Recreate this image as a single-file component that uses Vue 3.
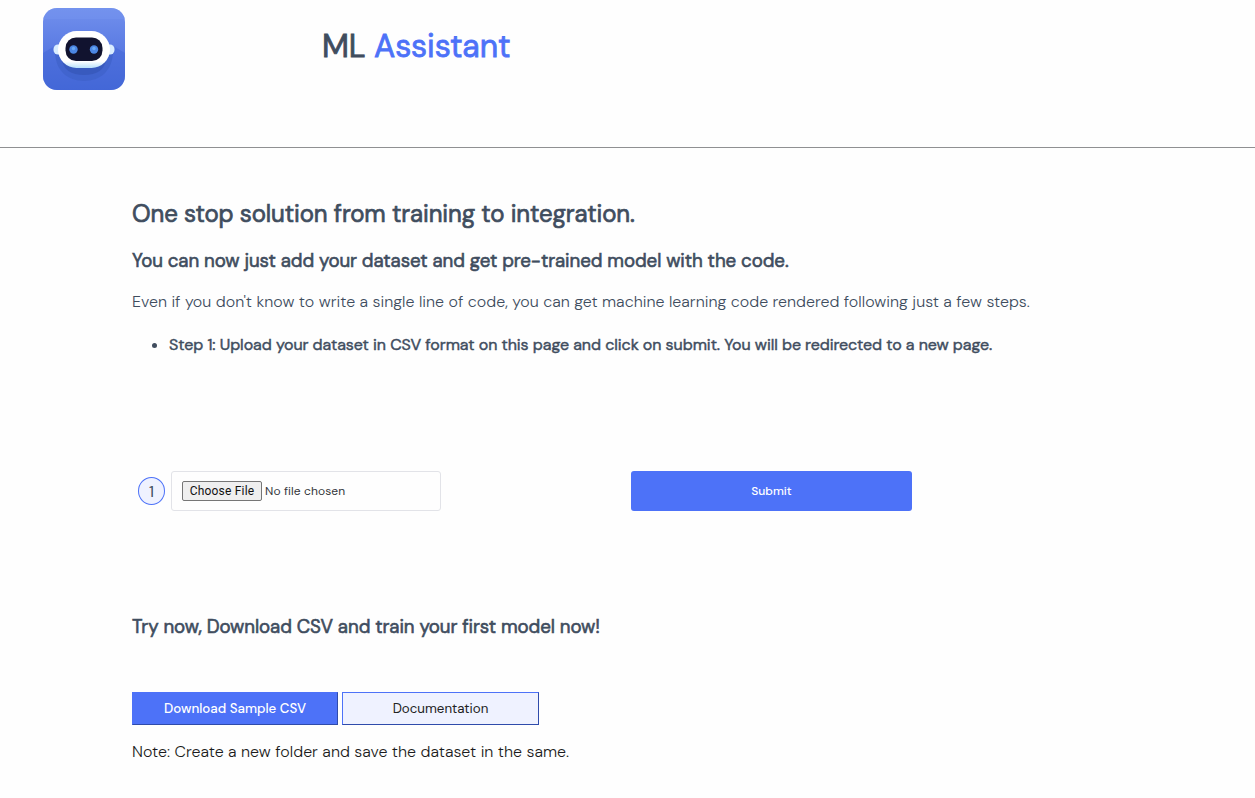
<script setup>
const steps = [
  'Step 1: Upload your dataset in CSV format on this page and click on submit. You will be redirected to a new page.',
]
</script>

<template>
  <div class="page">
    <header class="header">
      <svg class="logo" viewBox="0 0 82 82" role="img" aria-label="Robot logo">
        <defs>
          <linearGradient id="tile" x1="0" y1="0" x2="0" y2="1">
            <stop offset="0" stop-color="#7190ed" />
            <stop offset="0.5" stop-color="#5b7be3" />
            <stop offset="1" stop-color="#4569d9" />
          </linearGradient>
          <linearGradient id="shell" x1="0" y1="0" x2="0" y2="1">
            <stop offset="0.82" stop-color="#ffffff" />
            <stop offset="1" stop-color="#b9e2fc" />
          </linearGradient>
          <clipPath id="round"><rect width="82" height="82" rx="14" /></clipPath>
        </defs>
        <g clip-path="url(#round)">
          <rect width="82" height="82" fill="url(#tile)" />
          <rect width="82" height="11" fill="#7897ef" opacity="0.4" />
          <path d="M0 45 12 38H70L82 45V82H0Z" fill="#4166d6" opacity="0.5" />
          <path d="M12 43H70C70 62 58 73 41 73S12 62 12 43Z" fill="#3d61c7" opacity="0.65" />
          <path d="M18 49H64C62 62 54 67 41 67S20 62 18 49Z" fill="#3455b6" opacity="0.65" />
        </g>
        <rect x="10.5" y="36.5" width="61" height="10" rx="4.5" fill="#d9edff" />
        <rect x="15" y="23" width="52" height="37" rx="18.5" fill="url(#shell)" />
        <rect x="22.5" y="29.5" width="37" height="23.5" rx="10.5" fill="#11132f" />
        <circle cx="30.5" cy="41.5" r="4.2" fill="#4b86e3" />
        <circle cx="51" cy="41.5" r="4.2" fill="#4b86e3" />
        <circle cx="30.5" cy="40.5" r="1.7" fill="#69a9f5" />
        <circle cx="51" cy="40.5" r="1.7" fill="#69a9f5" />
      </svg>
      <h1 class="brand">ML <span class="accent">Assistant</span></h1>
    </header>

    <main class="content">
      <h2 class="headline"><span>One stop solution from training to integration.</span></h2>
      <h3 class="subhead"><span>You can now just add your dataset and get pre-trained model with the code.</span></h3>
      <p class="intro"><span>Even if you don't know to write a single line of code, you can get machine learning code rendered following just a few steps.</span></p>
      <ul class="steps">
        <li v-for="step in steps" :key="step"><span>{{ step }}</span></li>
      </ul>

      <form class="upload" @submit.prevent>
        <span class="badge">1</span>
        <div class="file">
          <button type="button" class="choose">Choose File</button>
          <span class="none">No file chosen</span>
        </div>
        <button type="submit" class="submit">Submit</button>
      </form>

      <h3 class="try"><span>Try now, Download CSV and train your first model now!</span></h3>
      <div class="actions">
        <button type="button" class="action primary"><span>Download Sample CSV</span></button>
        <button type="button" class="action secondary"><span>Documentation</span></button>
      </div>
      <p class="note"><span>Note: Create a new folder and save the dataset in the same.</span></p>
    </main>
  </div>
</template>

<style>
body {
  margin: 0;
  background: #fefefe;
}
</style>

<style scoped>
.page {
  height: 798px;
  overflow: hidden;
  box-sizing: border-box;
  font-family: "DM Sans", Inter, sans-serif;
  font-optical-sizing: none;
  color: #404d5e;
}
.page *,
.page *::before {
  box-sizing: border-box;
}
h1, h2, h3, p, ul {
  margin: 0;
  padding: 0;
  white-space: nowrap;
}
.header {
  display: flex;
  height: 148px;
  padding: 8px 0 0 43px;
  border-bottom: 1px solid #8f9092;
}
.logo {
  width: 82px;
  height: 82px;
  flex: none;
}
.brand {
  margin: 18px 0 0 197px;
  font-size: 32px;
  line-height: 40px;
  font-weight: 400;
  letter-spacing: -0.1px;
  -webkit-text-stroke: 0.8px;
}
.accent {
  color: #4d72f8;
}
.content {
  padding: 50px 0 0 132px;
}
.headline {
  font-size: 24px;
  line-height: 32px;
  font-weight: 400;
  letter-spacing: -0.095px;
  -webkit-text-stroke: 0.7px;
}
.subhead,
.try {
  font-size: 18.72px;
  line-height: 24px;
  font-weight: 400;
  letter-spacing: -0.07px;
  -webkit-text-stroke: 0.6px;
}
.subhead {
  margin-top: 19px;
}
.intro {
  margin-top: 17px;
  font-size: 16px;
  line-height: 24px;
  font-weight: 300;
  letter-spacing: 0.028px;
}
.steps {
  margin-top: 19px;
  padding-left: 20px;
  list-style: none;
  font-size: 16px;
  line-height: 24px;
  font-weight: 400;
  letter-spacing: -0.055px;
  -webkit-text-stroke: 0.45px;
}
.steps li {
  display: flex;
  align-items: center;
}
.steps li::before {
  content: "";
  width: 5px;
  height: 5px;
  margin-right: 12px;
  border-radius: 50%;
  background: #404d5e;
}
.upload {
  display: flex;
  align-items: center;
  height: 40px;
  margin: 114px 0 0 6px;
}
.badge {
  width: 27px;
  height: 28px;
  border: 1px solid #4d72f8;
  border-radius: 50%;
  background: #eff2ff;
  font-size: 16px;
  line-height: 28px;
  font-weight: 400;
  text-align: center;
}
.file {
  display: flex;
  align-items: center;
  width: 270px;
  height: 40px;
  margin-left: 6px;
  padding-left: 10px;
  border: 1px solid #e2e3e8;
  border-radius: 3px;
}
.choose {
  width: 80px;
  height: 20px;
  padding: 0;
  border: 1px solid #767676;
  border-radius: 2px;
  background: #efefef;
  color: #111;
  font-family: Roboto, sans-serif;
  font-size: 12px;
  line-height: 18px;
  letter-spacing: 0.2px;
}
.none {
  margin-left: 3px;
  color: #33363b;
  font-size: 12px;
  letter-spacing: 0.1px;
}
.submit {
  width: 281px;
  height: 40px;
  margin-left: 190px;
  padding: 0;
  border: 0;
  border-radius: 3px;
  background: #4d72f8;
  color: #fff;
  font-family: inherit;
  font-size: 12px;
  font-weight: 500;
}
.try {
  margin-top: 104px;
}
.actions {
  display: flex;
  gap: 4px;
  margin-top: 53px;
}
.action {
  height: 33px;
  padding: 0;
  border: 1px solid;
  border-color: #4d72f8 #2f4bab #2f4bab #4d72f8;
  font-family: inherit;
  font-size: 13.33px;
}
.primary {
  width: 206px;
  background: #4d72f8;
  color: #fff;
  font-weight: 500;
}
.secondary {
  width: 197px;
  background: #eff2ff;
  color: #222;
  font-weight: 400;
}
.note {
  margin-top: 15px;
  color: #1c1c20;
  font-size: 16px;
  line-height: 24px;
  font-weight: 300;
  letter-spacing: 0.035px;
}
</style>
